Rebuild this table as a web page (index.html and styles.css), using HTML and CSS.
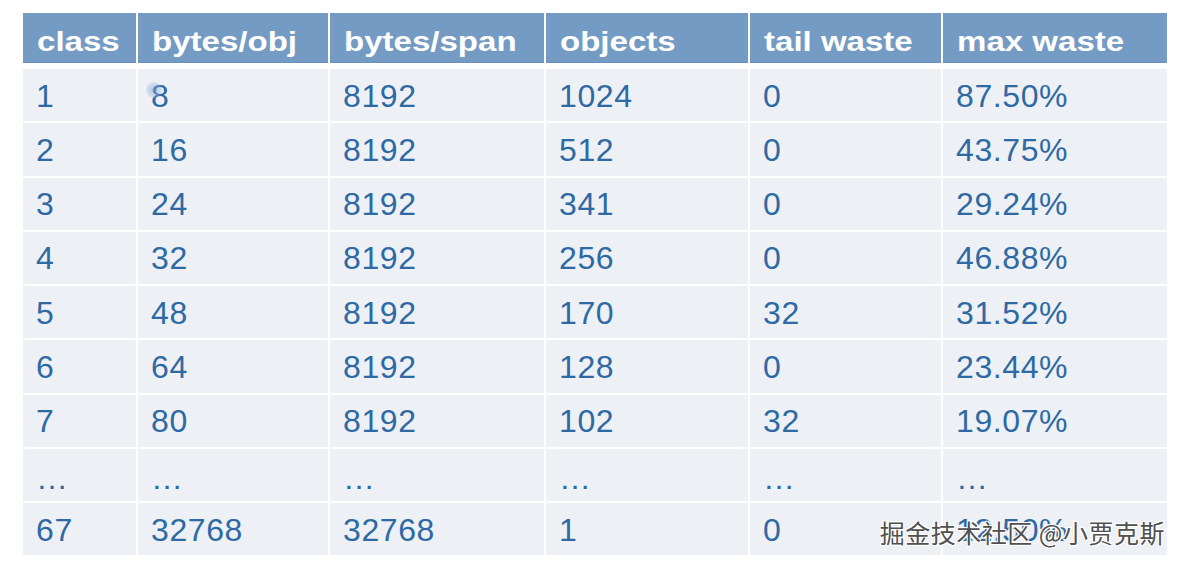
FILE: index.html
```html
<!DOCTYPE html>
<html lang="en">
<head>
<meta charset="utf-8">
<title>size classes</title>
<link rel="stylesheet" href="styles.css">
</head>
<body>
<div class="page">
  <div class="table">
    <div class="row head">
      <div class="cell"><span class="h">class</span></div>
      <div class="cell"><span class="h">bytes/obj</span></div>
      <div class="cell"><span class="h">bytes/span</span></div>
      <div class="cell"><span class="h">objects</span></div>
      <div class="cell"><span class="h">tail waste</span></div>
      <div class="cell"><span class="h">max waste</span></div>
    </div>
    <div class="body">
      <div class="row"><div class="cell">1</div><div class="cell cursor-cell">8<span class="cursor"></span></div><div class="cell">8192</div><div class="cell">1024</div><div class="cell">0</div><div class="cell">87.50%</div></div>
      <div class="row"><div class="cell">2</div><div class="cell">16</div><div class="cell">8192</div><div class="cell">512</div><div class="cell">0</div><div class="cell">43.75%</div></div>
      <div class="row"><div class="cell">3</div><div class="cell">24</div><div class="cell">8192</div><div class="cell">341</div><div class="cell">0</div><div class="cell">29.24%</div></div>
      <div class="row"><div class="cell">4</div><div class="cell">32</div><div class="cell">8192</div><div class="cell">256</div><div class="cell">0</div><div class="cell">46.88%</div></div>
      <div class="row"><div class="cell">5</div><div class="cell">48</div><div class="cell">8192</div><div class="cell">170</div><div class="cell">32</div><div class="cell">31.52%</div></div>
      <div class="row"><div class="cell">6</div><div class="cell">64</div><div class="cell">8192</div><div class="cell">128</div><div class="cell">0</div><div class="cell">23.44%</div></div>
      <div class="row"><div class="cell">7</div><div class="cell">80</div><div class="cell">8192</div><div class="cell">102</div><div class="cell">32</div><div class="cell">19.07%</div></div>
      <div class="row dots"><div class="cell">…</div><div class="cell">…</div><div class="cell">…</div><div class="cell">…</div><div class="cell">…</div><div class="cell">…</div></div>
      <div class="row"><div class="cell">67</div><div class="cell">32768</div><div class="cell">32768</div><div class="cell">1</div><div class="cell">0</div><div class="cell">12.50%</div></div>
    </div>
  </div>
  <div class="watermark">掘金技术社区 @小贾克斯</div>
</div>
</body>
</html>
```

FILE: styles.css
```css
html, body {
  margin: 0;
  padding: 0;
  background: #ffffff;
}

.page {
  position: relative;
  width: 1182px;
  height: 567px;
  box-sizing: border-box;
  padding: 13px 0 0 23px;
  font-family: "Liberation Sans", Arial, sans-serif;
}

.table {
  width: 1144px;
  display: flex;
  flex-direction: column;
  gap: 6px;
}

.row {
  display: grid;
  grid-template-columns: 113px 190px 214px 202px 191px 224px;
  column-gap: 2px;
}

.body {
  display: flex;
  flex-direction: column;
  gap: 2px;
}

.body .row {
  height: 52.25px;
}

.cell {
  display: flex;
  align-items: center;
  box-sizing: border-box;
  padding: 2px 0 0 13px;
  background: #edf1f6;
  color: #2f69a4;
  font-size: 32px;
  letter-spacing: 0.6px;
  white-space: nowrap;
  position: relative;
}

.head .cell {
  height: 50px;
  padding: 8px 0 0 14px;
  background: #739bc3;
  border-bottom: 1px solid #6890b9;
  color: #ffffff;
  font-size: 28px;
  font-weight: bold;
  letter-spacing: 0;
}

.h {
  display: inline-block;
  transform: scaleX(1.18);
  transform-origin: left center;
}

.dots .cell {
  align-items: flex-end;
  padding-bottom: 4px;
  font-size: 32px;
  letter-spacing: 0;
}

.cursor {
  position: absolute;
  left: 8px;
  top: 13px;
  width: 16px;
  height: 16px;
  border-radius: 50%;
  background: radial-gradient(circle, rgba(120,160,205,0.55) 0%, rgba(150,180,215,0.35) 55%, rgba(200,215,235,0) 100%);
}

.watermark {
  position: absolute;
  right: 17px;
  top: 519px;
  font-family: "Noto Sans CJK SC", "Liberation Sans", sans-serif;
  font-size: 25px;
  letter-spacing: 0.5px;
  line-height: 1.1;
  color: #505050;
  text-shadow: 1px 1px 0 #ffffff, -1px -1px 0 #ffffff, 1px -1px 0 #ffffff, -1px 1px 0 #ffffff;
}
```
